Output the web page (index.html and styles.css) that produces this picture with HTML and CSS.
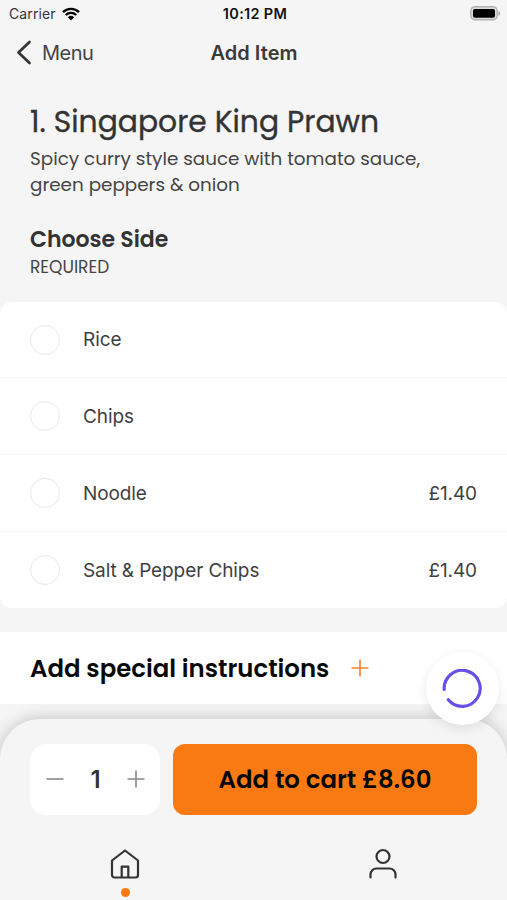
FILE: index.html
```html
<!DOCTYPE html>
<html lang="en">
<head>
<meta charset="utf-8">
<title>Add Item</title>
<link rel="stylesheet" href="styles.css">
</head>
<body>
<div class="app">
  <div class="status">
    <div class="carrier"><span>Carrier</span>
      <svg width="18" height="14" viewBox="0 0 18 14" fill="none" stroke="#000" stroke-width="2.4"><path d="M1 5.1a11.5 11.5 0 0 1 16 0"/><path d="M3.8 8a7.5 7.5 0 0 1 10.4 0"/><path d="M9 13.4L5.9 10.2a4.5 4.5 0 0 1 6.2 0z" fill="#000" stroke="none"/></svg>
    </div>
    <span class="time">10:12 PM</span>
    <svg class="battery" width="31" height="15" viewBox="0 0 31 15"><rect x=".8" y=".8" width="26.4" height="13" rx="4" fill="#ddd" stroke="#b4b4b4" stroke-width="1.4"/><rect x="3" y="3" width="22" height="8.8" rx="1.8"/><path d="M28.4 5c2.5.8 2.5 4 0 4.8z" fill="#aaa"/></svg>
  </div>
  <header class="nav">
    <a class="back"><svg width="16" height="26" viewBox="0 0 16 26" fill="none" stroke="#333" stroke-width="2.7" stroke-linecap="round" stroke-linejoin="round"><path d="M13.500 2L2.500 12.500l11 10.500"/></svg><span>Menu</span></a>
    <h1>Add Item</h1>
    <span></span>
  </header>
  <main>
    <section class="intro">
      <h2>1. Singapore King Prawn</h2>
      <p>Spicy curry style sauce with tomato sauce,<br>green peppers &amp; onion</p>
      <h3>Choose Side</h3>
      <div class="required">REQUIRED</div>
    </section>
    <ul class="options">
      <li><i class="radio"></i><span>Rice</span></li>
      <li><i class="radio"></i><span>Chips</span></li>
      <li><i class="radio"></i><span>Noodle</span><b>£1.40</b></li>
      <li><i class="radio"></i><span>Salt &amp; Pepper Chips</span><b>£1.40</b></li>
    </ul>
    <div class="special"><span>Add special instructions</span>
      <svg width="18" height="18" viewBox="0 0 18 18" stroke="#f8812a" stroke-width="1.6"><path d="M.5 9h17M9 .5v17"/></svg>
      <div class="spinner"><svg width="40" height="40" viewBox="0 0 40 40" fill="none" stroke="#6550e8" stroke-width="3.2" stroke-linecap="round"><path d="M2.200 20.400A18 18 0 1 1 6.300 30.800"/></svg></div>
    </div>
  </main>
  <footer class="sheet">
    <div class="actions">
      <div class="stepper">
        <svg width="18" height="18" viewBox="0 0 18 18" stroke="#888" stroke-width="1.6"><path d="M.5 9h17"/></svg>
        <strong>1</strong>
        <svg width="18" height="18" viewBox="0 0 18 18" stroke="#888" stroke-width="1.6"><path d="M.5 9h17M9 .5v17"/></svg>
      </div>
      <button class="cart"><span>Add to cart £8.60</span></button>
    </div>
    <nav class="tabs">
      <a><svg width="32" height="32" viewBox="0 0 32 32" fill="none" stroke="#333" stroke-width="2.2" stroke-linejoin="round"><path d="M3 12.500L16 2.500l13 10v14.500a2.500 2.500 0 0 1-2.500 2.500h-21A2.500 2.500 0 0 1 3 27z"/><path d="M12.700 29.500V18.700h6.600v10.800"/></svg><i class="dot"></i></a>
      <a><svg width="32" height="32" viewBox="0 0 32 32" fill="none" stroke="#333" stroke-width="2.2" stroke-linecap="round"><circle cx="16" cy="8.500" r="6.500"/><path d="M3.500 29.500v-3a6 6 0 0 1 6-6h13a6 6 0 0 1 6 6v3"/></svg></a>
    </nav>
  </footer>
</div>
</body>
</html>
```
FILE: styles.css
```css
* { box-sizing: border-box; margin: 0; padding: 0; }
body { background: #f5f5f5; color: #333; font-family: Poppins, Inter, sans-serif; overflow: hidden; }
svg { display: block; flex: none; }
.app { width: 507px; height: 900px; display: flex; flex-direction: column; }
.status { height: 28px; display: grid; grid-template-columns: 1fr auto 1fr; align-items: center; padding: 0 6px 1px 9px; font-family: Inter, sans-serif; font-size: 14px; line-height: 26px; }
.carrier { display: flex; align-items: center; gap: 6px; letter-spacing: .1px; }
.time { font-weight: 600; font-size: 14.500px; color: #111; letter-spacing: .3px; }
.battery { justify-self: end; margin-top: -1px; }
.nav { height: 49px; display: grid; grid-template-columns: 1fr auto 1fr; align-items: center; padding: 0 16px; font-family: Inter, sans-serif; }
.back { display: flex; align-items: center; gap: 10px; font-size: 20px; letter-spacing: -.5px; color: #444; }
.nav h1 { font-size: 20px; font-weight: 600; letter-spacing: .05px; color: #3a3a3a; padding-left: 1px; }
.intro { height: 225px; padding: 24px 30px 0; }
.intro h2 { font-size: 29.800px; line-height: 42px; font-weight: 400; white-space: nowrap; -webkit-text-stroke: .35px #333; }
.intro p { font-size: 18.350px; line-height: 25.500px; margin-top: 3px; color: #444; white-space: nowrap; }
.intro h3 { font-size: 22px; line-height: 32px; font-weight: 600; margin-top: 27px; }
.required { font-size: 17px; line-height: 24px; margin-top: -1px; color: #444; }
.options { list-style: none; background: #fff; border-radius: 12px; height: 306px; display: grid; grid-template-rows: 75px 77px 77px 77px; font-family: Inter, sans-serif; }
.options li { display: flex; align-items: center; padding: 0 30px; font-size: 19px; letter-spacing: -.1px; color: #3f3f3f; }
.options li + li { border-top: 1px solid #fafafa; }
.options li:last-child { border-color: #f4f4f4; }
.options b { font-weight: 400; margin-left: auto; }
.radio { width: 30px; height: 30px; border: 1.500px solid #e8e8e8; border-radius: 50%; margin-right: 23px; }
.special { position: relative; margin-top: 24px; height: 72px; background: #fff; display: flex; align-items: center; gap: 22px; padding-left: 30px; font-size: 24.400px; font-weight: 600; color: #080808; }
.special span { margin-top: 1px; }
.spinner { position: absolute; z-index: 2; left: 426px; top: 20px; width: 73px; height: 73px; border-radius: 50%; background: #fff; display: grid; place-items: center; box-shadow: 0 4px 12px rgba(0,0,0,.09); }
.spinner svg { margin: 0 0 0 -1px; }
.sheet { margin-top: 15px; flex: 1; background: #f5f5f5; border-radius: 40px 40px 0 0; box-shadow: 0 -1px 16px rgba(0,0,0,.2); clip-path: inset(-15px 0 0 0); padding: 25px 30px 0; }
.actions { display: flex; gap: 13px; height: 71px; }
.stepper { width: 130px; background: #fff; border-radius: 16px; display: flex; align-items: center; justify-content: space-between; padding: 0 15px 0 16px; font-family: Inter, sans-serif; font-size: 24px; }
.stepper svg { margin-top: -1px; }
.stepper strong { font-weight: 600; }
.cart { flex: 1; border: 0; border-radius: 12px; background: #f97a13; color: #080808; font: 600 24.400px Poppins, Inter, sans-serif; }
.tabs { display: grid; grid-template-columns: 190px 1fr; padding-top: 33px; }
.tabs a { display: flex; flex-direction: column; align-items: center; gap: 8px; }
.tabs a:last-child { padding-left: 69px; }
.dot { width: 9px; height: 9px; border-radius: 50%; background: #f97a13; }
```
